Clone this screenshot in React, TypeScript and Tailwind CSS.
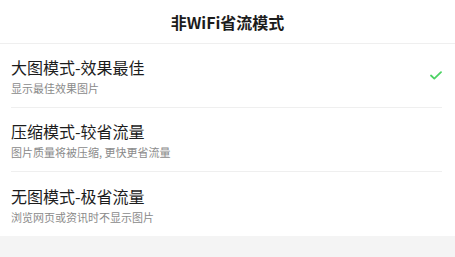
const modes = [
  { title: '大图模式-效果最佳', desc: '显示最佳效果图片', checked: true },
  { title: '压缩模式-较省流量', desc: '图片质量将被压缩, 更快更省流量', checked: false },
  { title: '无图模式-极省流量', desc: '浏览网页或资讯时不显示图片', checked: false },
];

function Check() {
  return (
    <svg width="12" height="9" viewBox="0 0 12 9" fill="none">
      <path d="M1 4.5 L4.3 7.6 L11 1.2" stroke="#4cd264" strokeWidth="1.8" strokeLinecap="round" strokeLinejoin="round" />
    </svg>
  );
}

export default function App() {
  return (
    <div
      className="w-[455px] h-[257px] bg-[#f4f4f4] overflow-hidden"
      style={{ fontFamily: '"Noto Sans CJK SC", "Noto Sans", sans-serif' }}
    >
      <div className="bg-white">
        <div className="h-[44px] flex items-center justify-center border-b border-[#efefef]">
          <h1 className="text-[16px] font-bold text-[#1c1c1c]">非WiFi省流模式</h1>
        </div>
        <ul>
          {modes.map((m, i) => (
            <li key={m.title} className="pl-[11px] pr-[13px]">
              <div
                className={`h-[64px] flex items-center justify-between ${
                  i < modes.length - 1 ? 'border-b border-[#efefef]' : ''
                }`}
              >
                <div className="flex flex-col">
                  <span className="text-[16px] leading-[22px] text-[#1c1c1c]">{m.title}</span>
                  <span className="mt-[3px] text-[11px] leading-[14px] text-[#8a8a8a]">{m.desc}</span>
                </div>
                {m.checked && <Check />}
              </div>
            </li>
          ))}
        </ul>
      </div>
    </div>
  );
}
